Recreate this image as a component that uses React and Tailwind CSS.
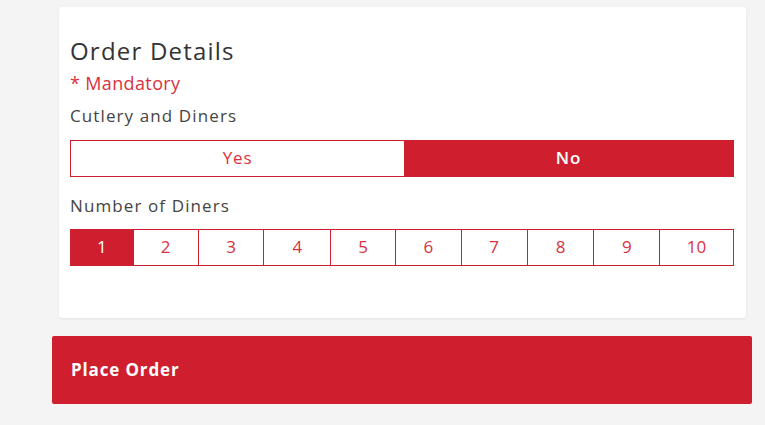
import React, { useState } from 'react';

const diners = [
    { n: 1, w: 'w-[62px]' },
    { n: 2, w: 'w-[65px]' },
    { n: 3, w: 'w-[66px]' },
    { n: 4, w: 'w-[67px]' },
    { n: 5, w: 'w-[65px]' },
    { n: 6, w: 'w-[66px]' },
    { n: 7, w: 'w-[66px]' },
    { n: 8, w: 'w-[67px]' },
    { n: 9, w: 'w-[66px]' },
    { n: 10, w: 'w-[74px]' },
];

const App = () => {
    const [cutlery, setCutlery] = useState('no');
    const [count, setCount] = useState(1);

    return (
        <div className="min-h-[425px] w-[765px] bg-[#f4f4f4] pt-[7px] font-['Open_Sans',sans-serif] text-[#333]">
            <div className="ml-[59px] w-[687px] h-[311px] bg-white rounded-[3px] shadow-[0_1px_3px_rgba(0,0,0,0.08)] pl-[11px] pr-[12px] pt-[30px]">
                <h2 className="text-[24px] leading-[28px] font-normal tracking-[0.05em] text-[#333]">Order Details</h2>
                <div className="mt-[7px] text-[18px] leading-[22px] tracking-[0.02em] text-[#d9313d]">* Mandatory</div>
                <div className="mt-[11px] text-[17px] leading-[22px] tracking-[0.065em] text-[#444]">Cutlery and Diners</div>

                <div className="mt-[13px] flex h-[37px] border border-[#cf1f2e]">
                    <button
                        onClick={() => setCutlery('yes')}
                        className={`w-[333px] text-[17px] leading-[22px] pb-[2px] tracking-[0.05em] ${cutlery === 'yes' ? 'bg-[#cf1f2e] text-white font-semibold' : 'bg-white text-[#d9313d]'}`}
                    >
                        Yes
                    </button>
                    <button
                        onClick={() => setCutlery('no')}
                        className={`flex-1 text-[17px] leading-[22px] pb-[2px] tracking-[0.05em] ${cutlery === 'no' ? 'bg-[#cf1f2e] text-white font-semibold' : 'bg-white text-[#d9313d]'}`}
                    >
                        No
                    </button>
                </div>

                <div className="mt-[18px] text-[17px] leading-[22px] tracking-[0.065em] text-[#444]">Number of Diners</div>

                <div className="mt-[12px] flex h-[37px] border border-[#cf1f2e]">
                    {diners.map((d, i) => (
                        <button
                            key={d.n}
                            onClick={() => setCount(d.n)}
                            className={`${d.w} text-[17px] leading-[22px] pb-[2px] ${i > 0 ? 'border-l border-[#cf1f2e]' : ''} ${count === d.n ? 'bg-[#cf1f2e] text-white' : 'bg-white text-[#d9313d]'}`}
                        >
                            {d.n}
                        </button>
                    ))}
                </div>
            </div>

            <button className="mt-[18px] ml-[52px] w-[700px] h-[68px] bg-[#cf1f2e] rounded-[2px] text-left pl-[19px] text-white text-[17px] font-bold tracking-[0.05em]">
                Place Order
            </button>
        </div>
    );
};

export default App;
